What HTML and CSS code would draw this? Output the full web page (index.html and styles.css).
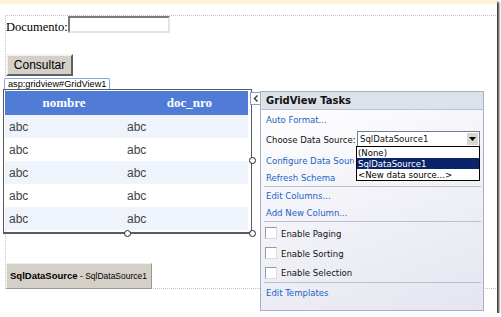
FILE: index.html
```html
<!DOCTYPE html>
<html>
<head>
<meta charset="utf-8">
<link rel="stylesheet" href="styles.css">
</head>
<body>
<div class="frame">
  <div class="band"></div>
  <div class="surface">
    <div class="doc-row">
      <span class="doc-label">Documento:</span><span class="input"></span>
    </div>
    <div class="btn">Consultar</div>
    <div class="tab">asp:gridview#GridView1</div>
    <div class="grid-wrap">
      <div class="grid">
        <div class="row head"><span class="c1">nombre</span><span class="c2">doc_nro</span></div>
        <div class="row alt"><span class="c1">abc</span><span class="c2">abc</span></div>
        <div class="row"><span class="c1">abc</span><span class="c2">abc</span></div>
        <div class="row alt"><span class="c1">abc</span><span class="c2">abc</span></div>
        <div class="row"><span class="c1">abc</span><span class="c2">abc</span></div>
        <div class="row alt"><span class="c1">abc</span><span class="c2">abc</span></div>
      </div>
      <span class="handle h-right-mid"></span>
      <span class="handle h-bottom-mid"></span>
      <span class="handle h-corner"></span>
      <span class="smart-tag"><svg width="11" height="11" viewBox="0 0 11 11"><path d="M6.5 2.5L3.5 5.5L6.5 8.5" fill="none" stroke="#333" stroke-width="1.4"/></svg></span>
    </div>
    <div class="sqlds"><b>SqlDataSource</b><span class="sq-rest"> - SqlDataSource1</span></div>
  </div>

  <div class="tasks">
    <div class="tasks-head">GridView Tasks</div>
    <div class="tasks-body">
      <div class="t-item link i-auto">Auto Format...</div>
      <div class="t-item i-choose">
        <span>Choose Data Source:</span>
        <span class="select"><span class="sel-text">SqlDataSource1</span><span class="sel-btn"><svg width="7" height="4" viewBox="0 0 7 4"><path d="M0 0h7L3.5 4z" fill="#000"/></svg></span></span>
      </div>
      <div class="t-item link i-config"><span class="clip">Configure Data Source...</span></div>
      <div class="t-item link i-refresh">Refresh Schema</div>
      <div class="sep"></div>
      <div class="t-item link i-editcol">Edit Columns...</div>
      <div class="t-item link i-addcol">Add New Column...</div>
      <div class="sep sep2"></div>
      <div class="t-item check i-paging"><span class="box"></span>Enable Paging</div>
      <div class="t-item check"><span class="box"></span>Enable Sorting</div>
      <div class="t-item check i-selection"><span class="box"></span>Enable Selection</div>
      <div class="sep sep3"></div>
      <div class="t-item link i-templates">Edit Templates</div>
    </div>
    <div class="dropdown">
      <div class="dd-item">(None)</div>
      <div class="dd-item sel">SqlDataSource1</div>
      <div class="dd-item">&lt;New data source...&gt;</div>
    </div>
  </div>
</div>
</body>
</html>
```

FILE: styles.css
```css
html, body {
  margin: 0;
  padding: 0;
  background: #fff;
}
.frame {
  position: relative;
  width: 497px;
  height: 313px;
  background: #fff;
  box-shadow: 2px 2px 2px #333;
  overflow: hidden;
}
.band {
  height: 4px;
  background: #fdf3d6;
}
.surface {
  margin: 11px 0 0 5px;
  width: 500px;
  height: 272px;
  border-top: 1px dotted #c4c4c4;
  border-left: 1px dotted #c4c4c4;
  border-bottom: 1px dotted #c4c4c4;
  display: flex;
  flex-direction: column;
  align-items: flex-start;
}
.doc-row {
  display: flex;
  align-items: flex-start;
  height: 20px;
}
.doc-label {
  font-family: "Liberation Serif", serif;
  font-size: 12.5px;
  line-height: 18px;
  padding-top: 2px;
  color: #000;
}
.input {
  display: block;
  width: 98px;
  height: 13px;
  border: 2px solid;
  border-color: #7a7a7a #e4e4e4 #e4e4e4 #7a7a7a;
  background: #fff;
}
.btn {
  margin-top: 18px;
  width: 63px;
  height: 18px;
  border: 2px solid;
  border-color: #f4f3ef #5f5f5f #5f5f5f #f4f3ef;
  background: #d4d0c8;
  font-family: "Liberation Sans", sans-serif;
  font-size: 12px;
  line-height: 18px;
  text-align: center;
  color: #000;
}
.tab {
  margin: 2px 0 0 -2px;
  height: 10px;
  padding: 0 3px;
  border: 1px solid #8aa7dd;
  border-bottom: none;
  border-radius: 2px 2px 0 0;
  font-family: "Liberation Sans", sans-serif;
  font-size: 9.2px;
  line-height: 11px;
  color: #000;
  background: #fff;
}
.grid-wrap {
  position: relative;
  margin-left: -3px;
  width: 244px;
  padding: 1px 2px 2px 1px;
  border: 1px solid #5a5a5a;
  border-bottom-width: 2px;
}
.grid {
  display: flex;
  flex-direction: column;
  width: 243px;
}
.row {
  display: flex;
  height: 23px;
  align-items: center;
  font-family: "Liberation Sans", sans-serif;
  font-size: 12px;
  color: #444;
  background: #fff;
}
.row.alt {
  background: #eff3fc;
}
.row .c1 {
  width: 118px;
  padding-left: 4px;
  box-sizing: border-box;
}
.row .c2 {
  flex: 1;
  padding-left: 4px;
  box-sizing: border-box;
}
.row.head {
  height: 24px;
  background: #507cd7;
  color: #fff;
  font-family: "Liberation Serif", serif;
  font-weight: bold;
  font-size: 13px;
}
.row.head .c1, .row.head .c2 {
  text-align: center;
  padding-left: 0;
}
.row.head .c2 {
  padding-left: 8px;
}
.handle {
  position: absolute;
  width: 5px;
  height: 5px;
  border: 1px solid #222;
  border-radius: 50%;
  background: #fff;
}
.h-right-mid { right: -5px; top: 67px; }
.h-bottom-mid { left: 120px; bottom: -5px; }
.h-corner { right: -5px; bottom: -5px; }
.smart-tag {
  position: absolute;
  right: -12px;
  top: 2px;
  width: 11px;
  height: 11px;
  border: 1px solid #7fa0d8;
  background: #fff;
  display: flex;
}
.sqlds {
  margin-top: 29px;
  width: 141px;
  height: 24px;
  padding-left: 3px;
  border: 1px solid;
  border-color: #eeeeee #9a9890 #9a9890 #eeeeee;
  background: #d4d0c8;
  font-family: "Liberation Sans", sans-serif;
  font-size: 9.5px;
  line-height: 24px;
  color: #000;
  white-space: nowrap;
}
.sqlds b {
  font-weight: bold;
}
.sq-rest {
  font-size: 8.5px;
}
.tasks {
  position: absolute;
  left: 260px;
  top: 91px;
  width: 222px;
  height: 218px;
  border: 1px solid #a3b0c8;
  display: flex;
  flex-direction: column;
  font-family: "DejaVu Sans Condensed", "Liberation Sans", sans-serif;
  font-size: 9.5px;
  color: #111;
}
.tasks-head {
  height: 17px;
  line-height: 17px;
  padding-left: 5px;
  background: #dde2ea;
  border-bottom: 1px solid #b8c2d4;
  font-family: "DejaVu Sans", sans-serif;
  font-weight: bold;
  font-size: 10px;
  color: #111;
}
.tasks-body {
  flex: 1;
  background: linear-gradient(160deg, #ffffff 0%, #f2f2f8 45%, #e5e5f0 100%);
  display: flex;
  flex-direction: column;
  padding: 1px 2px 0 3px;
}
.t-item {
  display: flex;
  align-items: center;
  padding-left: 2px;
  white-space: nowrap;
  flex: none;
}
.link {
  color: #2163c6;
}
.i-auto { height: 16px; }
.i-choose {
  height: 24px;
  justify-content: space-between;
}
.i-config { height: 18px; }
.clip {
  display: block;
  width: 88px;
  overflow: hidden;
}
.i-refresh { height: 16px; }
.sep {
  flex: none;
  height: 0;
  border-top: 1px solid #b7c0d2;
  margin: 1px 0 0;
}
.i-editcol { height: 17px; }
.i-addcol { height: 17px; }
.sep2 { margin-top: 0; }
.check {
  height: 20px;
  padding-left: 1px;
}
.i-paging { margin-top: 1px; }
.i-selection { height: 19px; }
.sep3 { margin-top: 0; }
.i-templates { height: 18px; }
.box {
  display: inline-block;
  width: 10px;
  height: 10px;
  border: 1px solid #9a9a9a;
  border-right-color: #dcdcdc;
  border-bottom-color: #dcdcdc;
  background: #fff;
  margin-right: 4px;
}
.select {
  display: flex;
  width: 121px;
  height: 14px;
  border: 1px solid #6f7c96;
  background: #fff;
  margin-right: 1px;
}
.sel-text {
  flex: 1;
  padding-left: 2px;
  line-height: 14px;
}
.sel-btn {
  width: 11px;
  height: 12px;
  margin: 1px;
  background: #d8d6d0;
  display: flex;
  align-items: center;
  justify-content: center;
}
.dropdown {
  position: absolute;
  left: 95px;
  top: 54px;
  width: 122px;
  border: 1px solid #000;
  background: #fff;
  display: flex;
  flex-direction: column;
}
.dd-item {
  height: 11px;
  line-height: 11px;
  padding-left: 1px;
  color: #000;
  white-space: nowrap;
}
.dd-item.sel {
  background: #0a246a;
  color: #fff;
}
```
